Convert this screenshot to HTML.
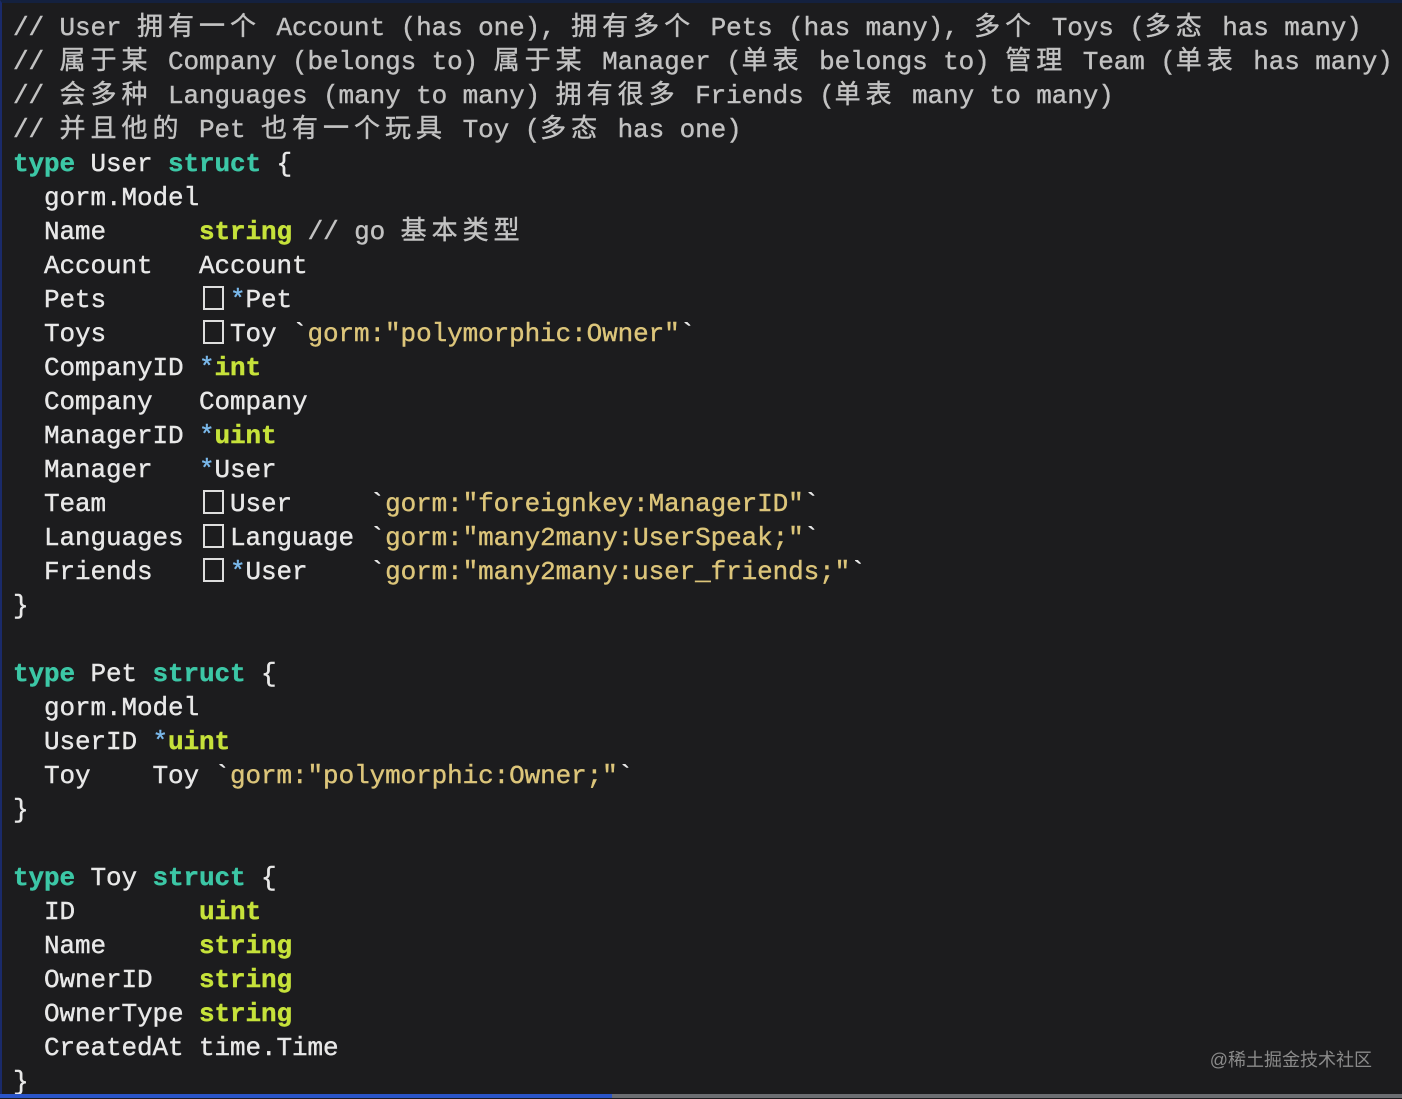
<!DOCTYPE html>
<html><head><meta charset="utf-8"><style>
html,body{margin:0;padding:0;}
body{width:1402px;height:1098px;background:#1c1c1e;overflow:hidden;position:relative;}
.frame{position:absolute;left:0;top:0;width:1402px;height:1098px;box-sizing:border-box;border-top:3px solid #14213f;border-left:2px solid #1a2a6a;}
pre{position:absolute;left:13px;top:11px;margin:0;font-family:"Liberation Mono","Noto Sans CJK SC",monospace;font-size:26px;line-height:34px;color:#e8e8e8;letter-spacing:-0.1px;-webkit-text-stroke:0.4px;}
.c{color:#c2c2c2}
.k{color:#3cc7a6;font-weight:bold}
.s{color:#c6e23a;font-weight:bold}
.t{color:#dcc57a}
.p{color:#7ab8ea}
.z{letter-spacing:5px}
.b{display:inline-block;width:21px;height:24px;border:2px solid #ddd;box-sizing:border-box;vertical-align:-3px;margin:0 6px 0 4px;-webkit-text-stroke:0;}
.wm{position:absolute;right:30px;top:1046px;color:#8a8a8a;font:18px "Liberation Sans","Noto Sans CJK SC",sans-serif;}
.bar{position:absolute;left:0;bottom:0;width:1402px;height:4px;background:#6c6e72;}
.bar2{position:absolute;left:0;bottom:0;width:612px;height:4px;background:#2b55c8;}
</style></head><body>
<div class="frame"></div>
<pre><span class="c">// User <span class="z">拥有一个</span> Account (has one), <span class="z">拥有多个</span> Pets (has many), <span class="z">多个</span> Toys (<span class="z">多态</span> has many)
// <span class="z">属于某</span> Company (belongs to) <span class="z">属于某</span> Manager (<span class="z">单表</span> belongs to) <span class="z">管理</span> Team (<span class="z">单表</span> has many)
// <span class="z">会多种</span> Languages (many to many) <span class="z">拥有很多</span> Friends (<span class="z">单表</span> many to many)
// <span class="z">并且他的</span> Pet <span class="z">也有一个玩具</span> Toy (<span class="z">多态</span> has one)</span>
<span class="k">type</span> User <span class="k">struct</span> {
  gorm.Model
  Name      <span class="s">string</span> <span class="c">// go <span class="z">基本类型</span></span>
  Account   Account
  Pets      <span class="b"></span><span class="p">*</span>Pet
  Toys      <span class="b"></span>Toy `<span class="t">gorm:"polymorphic:Owner"</span>`
  CompanyID <span class="p">*</span><span class="s">int</span>
  Company   Company
  ManagerID <span class="p">*</span><span class="s">uint</span>
  Manager   <span class="p">*</span>User
  Team      <span class="b"></span>User     `<span class="t">gorm:"foreignkey:ManagerID"</span>`
  Languages <span class="b"></span>Language `<span class="t">gorm:"many2many:UserSpeak;"</span>`
  Friends   <span class="b"></span><span class="p">*</span>User    `<span class="t">gorm:"many2many:user_friends;"</span>`
}

<span class="k">type</span> Pet <span class="k">struct</span> {
  gorm.Model
  UserID <span class="p">*</span><span class="s">uint</span>
  Toy    Toy `<span class="t">gorm:"polymorphic:Owner;"</span>`
}

<span class="k">type</span> Toy <span class="k">struct</span> {
  ID        <span class="s">uint</span>
  Name      <span class="s">string</span>
  OwnerID   <span class="s">string</span>
  OwnerType <span class="s">string</span>
  CreatedAt time.Time
}</pre>
<div class="wm">@稀土掘金技术社区</div>
<div class="bar"></div><div class="bar2"></div>
</body></html>
